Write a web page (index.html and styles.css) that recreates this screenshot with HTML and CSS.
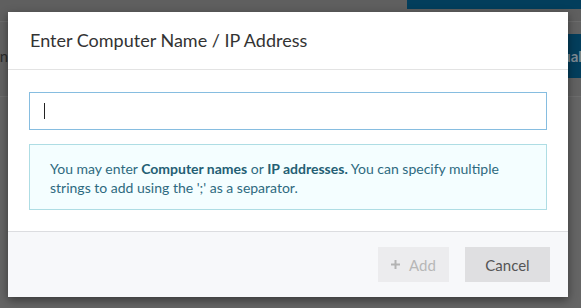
FILE: index.html
```html
<!DOCTYPE html>
<html>
<head>
<meta charset="utf-8">
<link rel="stylesheet" href="styles.css">
</head>
<body>
<div class="page">
  <div class="topbar"><div class="topbar-accent"></div></div>
  <div class="toolbar">
    <span class="toolbar-label">Action</span>
    <span class="toolbar-btn">Manual</span>
  </div>
</div>
<div class="modal">
  <div class="modal-header">
    <h4 class="modal-title">Enter Computer Name / IP Address</h4>
  </div>
  <div class="modal-body">
    <div class="input-box"><span class="caret"></span></div>
    <div class="info">You may enter <b>Computer names</b> or <b>IP addresses.</b> You can specify multiple strings to add using the ';' as a separator.</div>
  </div>
  <div class="modal-footer">
    <button class="btn btn-add" disabled><svg class="plus" width="9" height="9" viewBox="0 0 9 9"><path d="M3.5 0h2v3.5H9v2H5.5V9h-2V5.5H0v-2h3.5z" fill="#b3b3b3"/></svg>Add</button>
    <button class="btn btn-cancel">Cancel</button>
  </div>
</div>
</body>
</html>
```
FILE: styles.css
```css
* { box-sizing: border-box; }
html, body { margin: 0; padding: 0; }
body {
  width: 581px;
  height: 308px;
  overflow: hidden;
  background: #656565;
  font-family: Lato, "Open Sans", sans-serif;
  position: relative;
}
.page { width: 581px; }
.topbar {
  height: 22px;
  background: #5f5f5f;
  border-bottom: 1px solid #6c6c6c;
  display: flex;
  justify-content: flex-end;
  align-items: flex-start;
}
.topbar-accent {
  width: 174px;
  height: 9px;
  background: #033e5c;
}
.toolbar {
  height: 75px;
  border-bottom: 1px solid #6d6d6d;
  background: #626262;
  display: flex;
  align-items: center;
  justify-content: space-between;
  padding-bottom: 6px;
}
.toolbar-label {
  color: #2b2b2b;
  font-size: 15px;
  margin-left: -35px;
}
.toolbar-btn {
  background: #033e5c;
  color: #7d8b94;
  font-weight: bold;
  font-size: 15px;
  height: 44px;
  width: 70px;
  display: flex;
  align-items: center;
  justify-content: flex-end;
  padding-right: 0;
  margin-right: -1px;
}
.modal {
  position: absolute;
  left: 8px;
  top: 12px;
  width: 560px;
  background: #fff;
  box-shadow: 0 3px 9px rgba(0,0,0,0.45);
}
.modal-header {
  height: 58px;
  border-bottom: 1px solid #e3e3e3;
  display: flex;
  align-items: center;
  padding: 0 22px;
}
.modal-title {
  margin: 0;
  font-weight: normal;
  font-size: 18px;
  color: #333;
  padding-bottom: 1px;
}
.modal-body {
  padding: 22px 21px 21px;
  display: flex;
  flex-direction: column;
  gap: 14px;
}
.input-box {
  height: 38px;
  border: 1px solid #86bde0;
  display: flex;
  align-items: center;
  padding-left: 14px;
}
.caret {
  width: 1px;
  height: 16px;
  background: #222;
}
.info {
  background: #f4feff;
  border: 1px solid #aedde4;
  color: #2e6a80;
  font-size: 14px;
  line-height: 19px;
  padding: 14px 20px 12px;
}
.info b { font-weight: bold; color: #245f74; }
.modal-footer {
  background: #f7f8fa;
  border-top: 1px solid #dcdde0;
  padding: 15px 18px 15px;
  display: flex;
  justify-content: flex-end;
  gap: 16px;
}
.btn {
  height: 35px;
  border: none;
  font-family: Lato, "Open Sans", sans-serif;
  font-size: 15px;
  display: flex;
  align-items: center;
  justify-content: center;
  padding: 0;
}
.btn-add {
  width: 71px;
  background: #ececee;
  color: #b7b7b7;
  gap: 9px;
}
.plus { display: block; }
.btn-cancel {
  width: 85px;
  background: #dfdfe1;
  color: #555;
}
```
